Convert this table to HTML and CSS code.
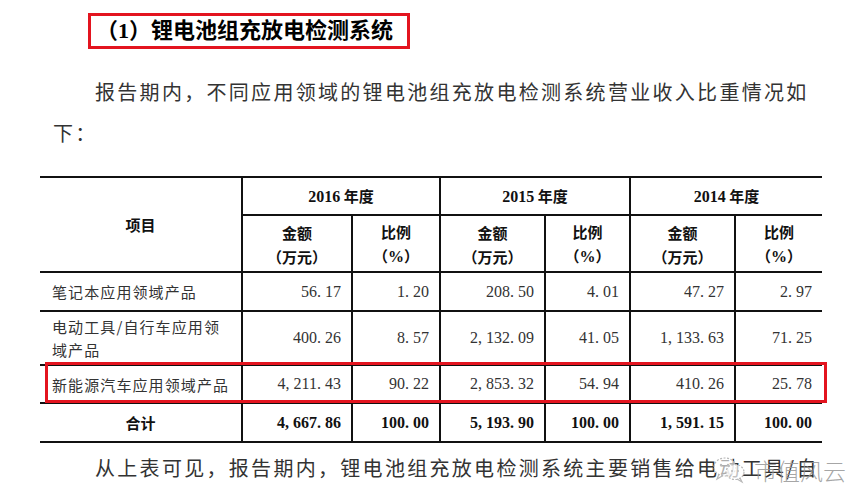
FILE: index.html
```html
<!DOCTYPE html>
<html lang="zh">
<head>
<meta charset="utf-8">
<link rel="stylesheet" href="styles.css">
</head>
<body>
<div class="page">
  <div class="heading-wrap">
    <h1 class="heading">（1）锂电池组充放电检测系统</h1>
  </div>
  <p class="para">报告期内，不同应用领域的锂电池组充放电检测系统营业收入比重情况如下：</p>
  <div class="table-wrap">
    <table class="data">
      <colgroup>
        <col class="c-item">
        <col class="c-amt">
        <col class="c-pct">
        <col class="c-amt2">
        <col class="c-pct2">
        <col class="c-amt2">
        <col class="c-pct3">
      </colgroup>
      <thead>
        <tr class="h1">
          <th rowspan="2" class="item-head">项目</th>
          <th colspan="2"><span class="num">2016</span> 年度</th>
          <th colspan="2"><span class="num">2015</span> 年度</th>
          <th colspan="2"><span class="num">2014</span> 年度</th>
        </tr>
        <tr class="h2">
          <th>金额<br>（万元）</th>
          <th>比例<br>（<span class="num">%</span>）</th>
          <th>金额<br>（万元）</th>
          <th>比例<br>（<span class="num">%</span>）</th>
          <th>金额<br>（万元）</th>
          <th>比例<br>（<span class="num">%</span>）</th>
        </tr>
      </thead>
      <tbody>
        <tr class="r1">
          <td class="name">笔记本应用领域产品</td>
          <td class="num-cell">56. 17</td>
          <td class="num-cell">1. 20</td>
          <td class="num-cell">208. 50</td>
          <td class="num-cell">4. 01</td>
          <td class="num-cell">47. 27</td>
          <td class="num-cell">2. 97</td>
        </tr>
        <tr class="r2">
          <td class="name">电动工具/自行车应用领<br>域产品</td>
          <td class="num-cell">400. 26</td>
          <td class="num-cell">8. 57</td>
          <td class="num-cell">2, 132. 09</td>
          <td class="num-cell">41. 05</td>
          <td class="num-cell">1, 133. 63</td>
          <td class="num-cell">71. 25</td>
        </tr>
        <tr class="r3">
          <td class="name">新能源汽车应用领域产品</td>
          <td class="num-cell">4, 211. 43</td>
          <td class="num-cell">90. 22</td>
          <td class="num-cell">2, 853. 32</td>
          <td class="num-cell">54. 94</td>
          <td class="num-cell">410. 26</td>
          <td class="num-cell">25. 78</td>
        </tr>
        <tr class="r4 total">
          <td class="name total-name">合计</td>
          <td class="num-cell">4, 667. 86</td>
          <td class="num-cell">100. 00</td>
          <td class="num-cell">5, 193. 90</td>
          <td class="num-cell">100. 00</td>
          <td class="num-cell">1, 591. 15</td>
          <td class="num-cell">100. 00</td>
        </tr>
      </tbody>
    </table>
    <div class="highlight"></div>
  </div>
  <div class="last-wrap">
    <p class="para last">从上表可见，报告期内，锂电池组充放电检测系统主要销售给电动工具/自</p>
    <div class="watermark">
      <svg class="wm-icon" width="36" height="28" viewBox="0 0 36 28">
        <ellipse cx="13" cy="11" rx="11" ry="9" fill="rgba(255,255,255,0.6)" stroke="#b8b8b8" stroke-width="1.2" stroke-dasharray="2 1.5"/>
        <path d="M7 18 L5 23 L11 19.5" fill="none" stroke="#b8b8b8" stroke-width="1.2"/>
        <ellipse cx="23" cy="16" rx="9" ry="7.5" fill="rgba(255,255,255,0.7)" stroke="#b8b8b8" stroke-width="1.2" stroke-dasharray="2 1.5"/>
        <path d="M28 22 L30 26 L25 23" fill="none" stroke="#b8b8b8" stroke-width="1.2"/>
        <circle cx="9" cy="9" r="1.2" fill="#bbb"/>
        <circle cx="16" cy="9" r="1.2" fill="#bbb"/>
        <circle cx="20" cy="15" r="1" fill="#bbb"/>
        <circle cx="26" cy="15" r="1" fill="#bbb"/>
      </svg>
      <span class="wm-text">市值风云</span>
    </div>
  </div>
</div>
</body>
</html>
```
FILE: styles.css
```css
html, body {
  margin: 0;
  padding: 0;
  background: #ffffff;
}
.page {
  width: 864px;
  height: 500px;
  overflow: hidden;
  font-family: "Noto Sans CJK SC", "Liberation Serif", serif;
  color: #2a2a2a;
}
.heading-wrap {
  padding-top: 13px;
  padding-left: 88px;
}
.heading {
  display: inline-block;
  margin: 0;
  box-sizing: border-box;
  height: 36px;
  width: 322px;
  padding: 0 0 0 5px;
  border: 3px solid #e3141f;
  font-family: "Liberation Serif", "Noto Sans CJK SC", serif;
  font-size: 22px;
  font-weight: 700;
  line-height: 30px;
  color: #000;
  white-space: nowrap;
}
.para {
  margin: 22px 0 0 53px;
  width: 775px;
  font-size: 20px;
  line-height: 41px;
  letter-spacing: 2.3px;
  text-indent: 42px;
  color: #333;
}
.table-wrap {
  position: relative;
  margin: 23px 0 0 40px;
  width: 782px;
}
.data {
  border-collapse: collapse;
  width: 782px;
  table-layout: fixed;
  font-size: 15px;
  color: #222;
}
.c-item { width: 202px; }
.c-amt { width: 110px; }
.c-pct { width: 88px; }
.c-amt2 { width: 105px; }
.c-pct2 { width: 85px; }
.c-pct3 { width: 87px; }
.data th, .data td {
  border: 2px solid #111;
  padding: 0;
}
.data tr > :first-child { border-left: none; }
.data tr > :last-child { border-right: none; }
.data th {
  font-weight: 700;
  text-align: center;
  line-height: 24px;
  color: #111;
}
.data th .num, .data .num {
  font-family: "Liberation Serif", serif;
  font-size: 16px;
}
.h1 { height: 38px; }
.h2 { height: 57px; }
.h2 th { padding-top: 2px; }
.r1 { height: 39px; }
.r2 { height: 54px; }
.r3 { height: 38px; }
.r4 { height: 39px; }
.data td.name {
  text-align: left;
  padding-left: 12px;
  letter-spacing: 1.1px;
  line-height: 23px;
  color: #333;
}
.data td.num-cell {
  text-align: right;
  padding-right: 10px;
  font-family: "Liberation Serif", serif;
  font-size: 16px;
  color: #333;
}
.total td {
  font-weight: 700;
  color: #111 !important;
}
.data td.total-name {
  text-align: center;
  padding-left: 0;
  letter-spacing: 0;
}
.highlight {
  position: absolute;
  left: 5px;
  top: 186px;
  width: 782px;
  height: 41px;
  box-sizing: border-box;
  border: 3px solid #e3141f;
  pointer-events: none;
}
.last-wrap {
  position: relative;
}
.para.last {
  margin-top: 4px;
  white-space: nowrap;
}
.watermark {
  position: absolute;
  left: 712px;
  top: 6px;
  display: flex;
  align-items: center;
  gap: 6px;
}
.wm-text {
  font-family: "Noto Sans CJK SC", sans-serif;
  font-weight: 300;
  font-size: 23px;
  color: rgba(150, 150, 150, 0.85);
}
```
